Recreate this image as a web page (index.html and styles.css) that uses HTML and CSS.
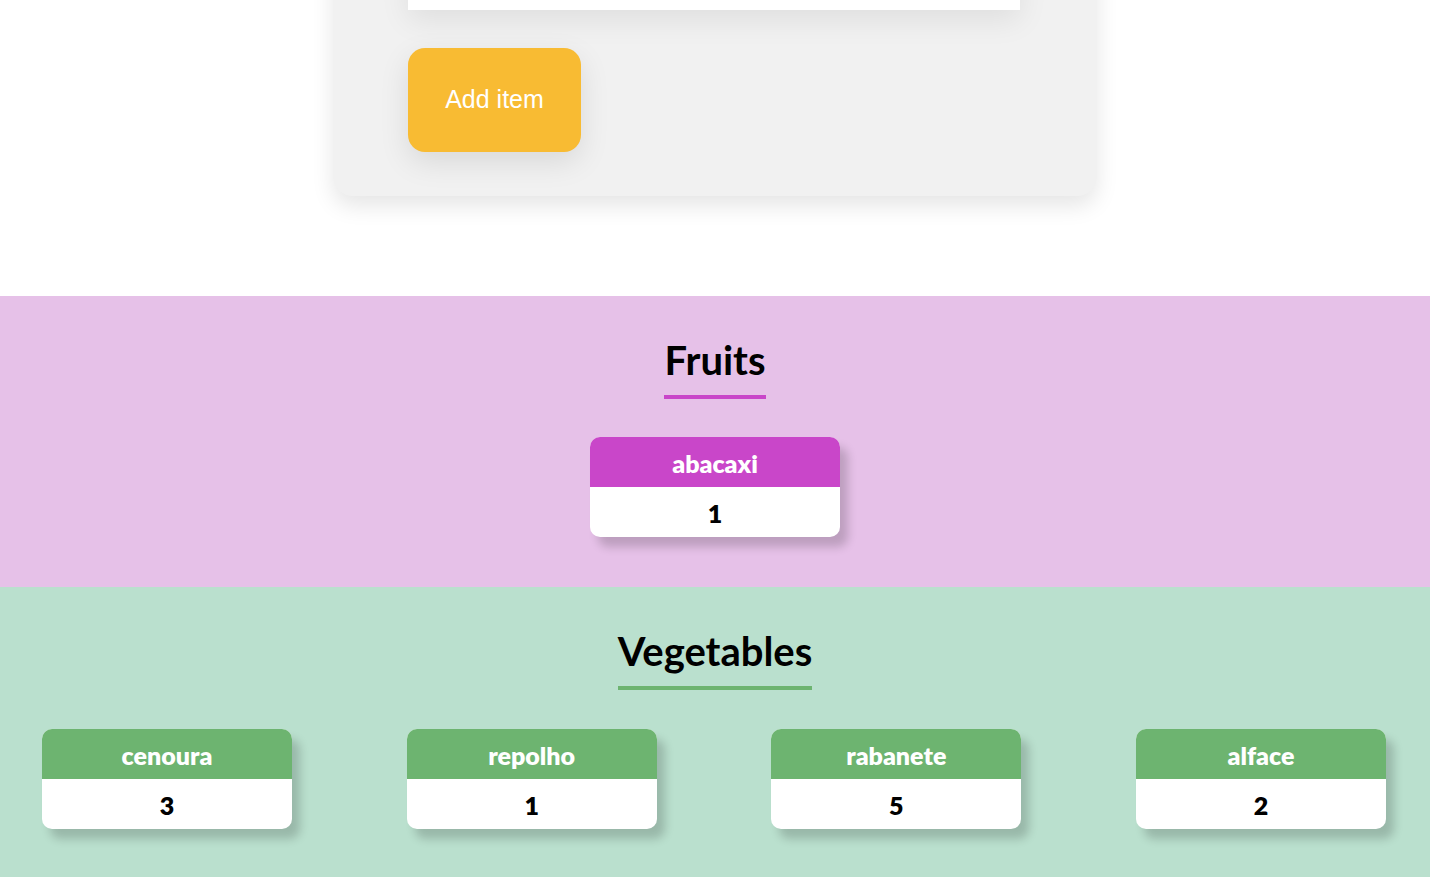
FILE: index.html
```html
<!DOCTYPE html>
<html lang="en">
<head>
<meta charset="utf-8">
<title>Shopping list</title>
<link rel="stylesheet" href="styles.css">
</head>
<body>
<main class="page">
  <form class="form-card">
    <input class="item-input" type="text" aria-label="Item">
    <button class="add-btn" type="button">Add item</button>
  </form>

  <section class="group group-fruits">
    <h2 class="group-title">Fruits</h2>
    <div class="cards cards-center">
      <div class="card">
        <div class="card-head">abacaxi</div>
        <div class="card-body">1</div>
      </div>
    </div>
  </section>

  <section class="group group-veg">
    <h2 class="group-title">Vegetables</h2>
    <div class="cards cards-spread">
      <div class="card"><div class="card-head">cenoura</div><div class="card-body">3</div></div>
      <div class="card"><div class="card-head">repolho</div><div class="card-body">1</div></div>
      <div class="card"><div class="card-head">rabanete</div><div class="card-body">5</div></div>
      <div class="card"><div class="card-head">alface</div><div class="card-body">2</div></div>
    </div>
  </section>
</main>
</body>
</html>
```

FILE: styles.css
```css
* { box-sizing: border-box; }
html, body { margin: 0; padding: 0; background: #ffffff; }
body { font-family: "Segoe UI", Lato, "Open Sans", sans-serif; overflow: hidden; }

.page { display: flex; flex-direction: column; align-items: stretch; }

.form-card {
  align-self: center;
  width: 764px;
  margin-top: -80px;
  padding: 40px 75px 44px;
  background: #f1f1f1;
  border-radius: 20px;
  box-shadow: 0 10px 22px rgba(0,0,0,0.10);
  display: flex;
  flex-direction: column;
  align-items: flex-start;
  gap: 38px;
}

.item-input {
  width: 612px;
  height: 50px;
  border: none;
  background: #ffffff;
  box-shadow: 0 10px 30px rgba(0,0,0,0.08);
  outline: none;
}

.add-btn {
  width: 173px;
  height: 104px;
  border: none;
  border-radius: 17px;
  background: #f8bb33;
  color: #ffffff;
  font-family: "Liberation Sans", Arial, sans-serif;
  font-size: 25px;
  padding: 0 0 2px;
  box-shadow: 0 10px 30px rgba(0,0,0,0.10);
}

.group {
  display: flex;
  flex-direction: column;
  align-items: center;
  padding: 37px 0 50px;
}
.group-fruits { margin-top: 100px; background: #e6c1e8; }
.group-veg { background: #bae0ce; }

.group-title {
  margin: 0 0 38px;
  font-size: 40px;
  line-height: 48px;
  font-weight: 700;
  color: #000;
  padding: 3px 0 11px;
  border-bottom: 4px solid;
}
.group-fruits .group-title { border-color: #c946c9; }
.group-veg .group-title { border-color: #6db470; }
.group-veg .cards { margin-top: 1px; }

.cards { display: flex; width: 100%; }
.cards-center { justify-content: center; }
.cards-spread { padding: 0 44px 0 42px; justify-content: space-between; }

.card {
  width: 250px;
  border-radius: 10px;
  overflow: hidden;
  background: #fff;
  box-shadow: 8px 10px 10px rgba(0,0,0,0.18);
  text-align: center;
  font-size: 25px;
  font-weight: 800;
}
.card-head {
  height: 50px;
  line-height: 50px;
  padding-top: 1px;
  color: #fff;
}
.group-fruits .card-head { background: #c946c9; }
.group-veg .card-head { background: #6db470; }
.card-body {
  height: 50px;
  line-height: 50px;
  padding-top: 1px;
  color: #000;
}
```
